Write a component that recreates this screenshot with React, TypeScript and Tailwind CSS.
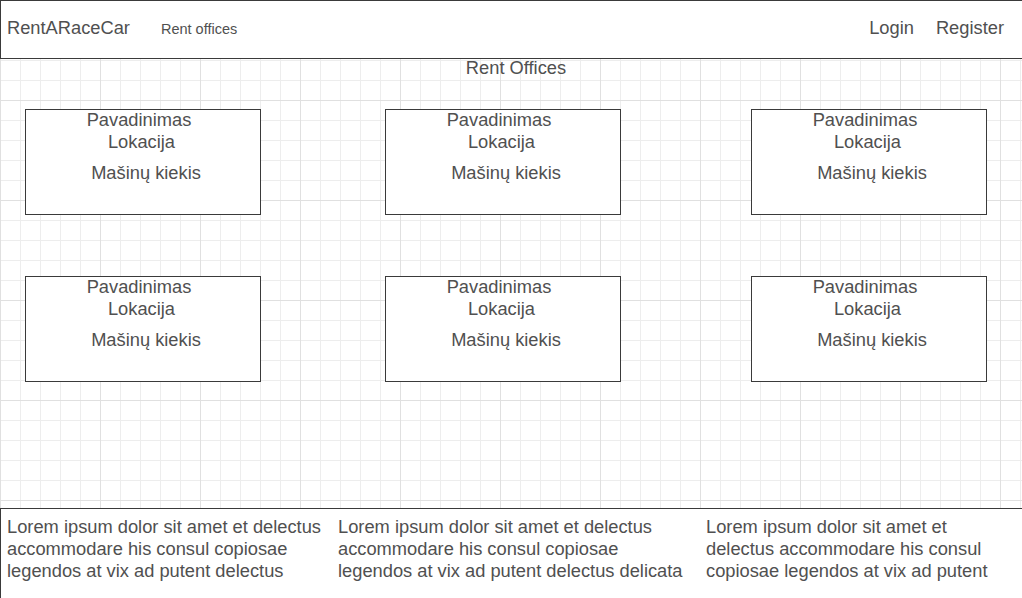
import React from 'react';

const offices = [1, 2, 3, 4, 5, 6];

const footerCols = [
  'Lorem ipsum dolor sit amet et delectus accommodare his consul copiosae legendos at vix ad putent delectus',
  'Lorem ipsum dolor sit amet et delectus accommodare his consul copiosae legendos at vix ad putent delectus delicata',
  'Lorem ipsum dolor sit amet et delectus accommodare his consul copiosae legendos at vix ad putent',
];

function OfficeCard() {
  return (
    <div className="w-[236px] h-[106px] border border-[#3a3a3a] bg-white flex flex-col items-center text-[18.3px] leading-[22px] text-[#505050]">
      <p className="-mt-[1px] pr-[8px]">Pavadinimas</p>
      <p className="pr-[3px]">Lokacija</p>
      <p className="mt-[9px] pl-[6px]">Mašinų kiekis</p>
    </div>
  );
}

export default function App() {
  return (
    <div
      className="w-[1022px] h-[598px] overflow-hidden flex flex-col bg-white text-[#505050] font-['Liberation_Sans',Arial,sans-serif] [background-image:linear-gradient(to_right,#e0e0e0_1px,transparent_1px),linear-gradient(to_bottom,#e0e0e0_1px,transparent_1px),linear-gradient(to_right,#ededed_1px,transparent_1px),linear-gradient(to_bottom,#ededed_1px,transparent_1px)] [background-size:100px_100px,100px_100px,20px_20px,20px_20px]"
    >
      {/* header */}
      <header className="h-[59px] shrink-0 border-t border-l border-b border-[#3a3a3a] bg-white flex items-baseline pt-[16px] pl-[6px] pr-[18px]">
        <span className="text-[18.3px] leading-[22px]">RentARaceCar</span>
        <span className="ml-[31px] text-[14.5px] leading-[22px]">Rent offices</span>
        <nav className="ml-auto flex items-baseline gap-[22px] text-[18.3px] leading-[22px]">
          <span>Login</span>
          <span>Register</span>
        </nav>
      </header>

      {/* offices */}
      <main className="h-[449px] shrink-0">
        <h1 className="text-center pl-[10px] text-[18.3px] leading-[18px]">Rent Offices</h1>
        <div className="mt-[32px] ml-[25px] grid grid-cols-[360px_366px_236px] gap-y-[61px]">
          {offices.map(o => (
            <OfficeCard key={o} />
          ))}
        </div>
      </main>

      {/* footer */}
      <footer className="flex-1 border-t border-l border-[#3a3a3a] bg-white flex pt-[7px] pl-[6px] text-[18.3px] leading-[22px]">
        <p className="w-[331px]">{footerCols[0]}</p>
        <p className="w-[353px] mr-[15px]">{footerCols[1]}</p>
        <p className="w-[298px]">{footerCols[2]}</p>
      </footer>
    </div>
  );
}
